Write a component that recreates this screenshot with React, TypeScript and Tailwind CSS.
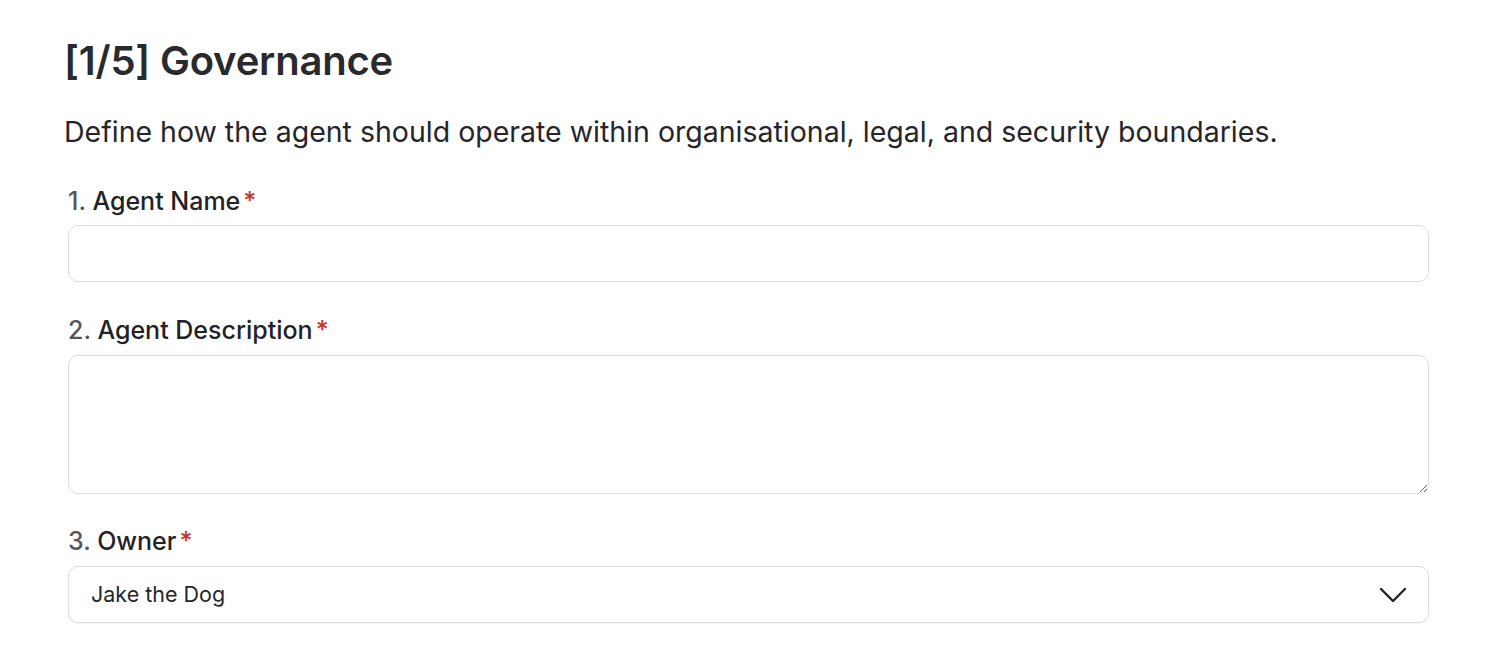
import { useState } from "react";

const FONT = { fontFamily: 'Inter, "Noto Sans", sans-serif' };

function ChevronDownIcon() {
  return (
    <svg width="28" height="16" viewBox="0 0 28 16" fill="none">
      <path
        d="M2 2L14 14L26 2"
        stroke="#222226"
        strokeWidth="2.4"
        strokeLinecap="round"
        strokeLinejoin="round"
      />
    </svg>
  );
}

function FieldLabel({ index, text }: { index: number; text: string }) {
  return (
    <label className="block text-[25px] leading-[34px] font-medium text-[#232327]">
      <span className="text-[#55555b]">{index}.</span> {text}
      <span className="ml-[3px] text-[#cc3328]">*</span>
    </label>
  );
}

export default function App() {
  const [name, setName] = useState("");
  const [description, setDescription] = useState("");
  const [owner] = useState("Jake the Dog");

  return (
    <main className="min-h-screen bg-white" style={FONT}>
      <div className="w-[1429px] pt-[37px] pl-[64px]">
        <h1 className="text-[40px] leading-[48px] font-semibold tracking-[-0.2px] text-[#2a2a2e]">
          [1/5] Governance
        </h1>
        <p className="mt-[26px] text-[28.5px] leading-[42px] text-[#26262a]">
          Define how the agent should operate within organisational, legal, and security boundaries.
        </p>

        <div className="mt-[31px] flex flex-col pl-[4px]">
          <FieldLabel index={1} text="Agent Name" />
          <input
            value={name}
            onChange={(e) => setName(e.target.value)}
            className="mt-[7px] h-[57px] w-full rounded-[10px] border border-[#dcdce0] bg-white px-[22px] text-[22px] text-[#222] outline-none"
          />

          <div className="mt-[31px]">
            <FieldLabel index={2} text="Agent Description" />
          </div>
          <textarea
            value={description}
            onChange={(e) => setDescription(e.target.value)}
            className="mt-[8px] h-[139px] w-full rounded-[10px] border border-[#dcdce0] bg-white px-[22px] py-[14px] text-[22px] text-[#222] outline-none"
          />

          <div className="mt-[30px]">
            <FieldLabel index={3} text="Owner" />
          </div>
          <button
            type="button"
            className="mt-[8px] flex h-[57px] w-full items-center justify-between rounded-[10px] border border-[#dcdce0] bg-white pr-[21px] pl-[22px] text-left shadow-[0_1px_2px_rgba(0,0,0,0.05)]"
          >
            <span className="text-[21.5px] text-[#26262a]">{owner}</span>
            <ChevronDownIcon />
          </button>
        </div>
      </div>
    </main>
  );
}
